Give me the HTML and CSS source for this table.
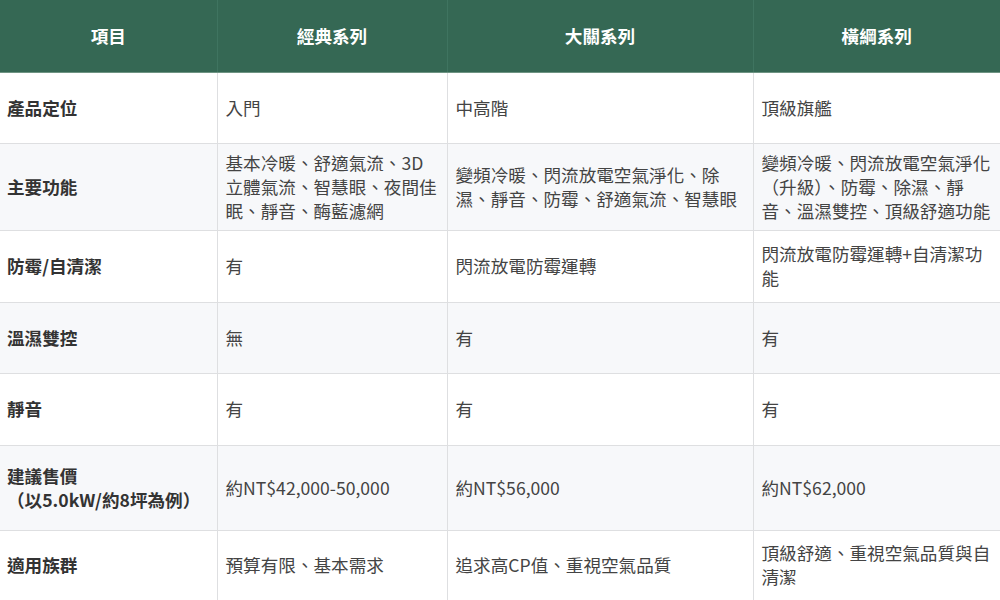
FILE: index.html
```html
<!DOCTYPE html>
<html lang="zh-Hant">
<head>
<meta charset="utf-8">
<title>系列比較</title>
<link rel="stylesheet" href="styles.css">
</head>
<body>
<table class="compare">
  <colgroup>
    <col class="c1"><col class="c2"><col class="c3"><col class="c4">
  </colgroup>
  <thead>
    <tr class="h-head">
      <th>項目</th><th>經典系列</th><th>大關系列</th><th>橫綱系列</th>
    </tr>
  </thead>
  <tbody>
    <tr class="h71">
      <td class="label">產品定位</td><td>入門</td><td>中高階</td><td>頂級旗艦</td>
    </tr>
    <tr class="alt h87">
      <td class="label">主要功能</td>
      <td>基本冷暖、舒適氣流、3D立體氣流、智慧眼、夜間佳眠、靜音、酶藍濾網</td>
      <td>變頻冷暖、閃流放電空氣淨化、除濕、靜音、防霉、舒適氣流、智慧眼</td>
      <td>變頻冷暖、閃流放電空氣淨化（升級）、防霉、除濕、靜音、溫濕雙控、頂級舒適功能</td>
    </tr>
    <tr class="h72">
      <td class="label">防霉/自清潔</td><td>有</td><td>閃流放電防霉運轉</td><td>閃流放電防霉運轉+自清潔功能</td>
    </tr>
    <tr class="alt h71">
      <td class="label">溫濕雙控</td><td>無</td><td>有</td><td>有</td>
    </tr>
    <tr class="h72">
      <td class="label">靜音</td><td>有</td><td>有</td><td>有</td>
    </tr>
    <tr class="alt h85">
      <td class="label">建議售價<br>（以5.0kW/約8坪為例）</td><td>約NT$42,000-50,000</td><td>約NT$56,000</td><td>約NT$62,000</td>
    </tr>
    <tr class="h70">
      <td class="label">適用族群</td><td>預算有限、基本需求</td><td>追求高CP值、重視空氣品質</td><td>頂級舒適、重視空氣品質與自清潔</td>
    </tr>
  </tbody>
</table>
</body>
</html>
```
FILE: styles.css
```css
html, body {
  margin: 0;
  padding: 0;
  background: #ffffff;
}
body {
  font-family: "Noto Sans CJK TC", "Noto Sans", sans-serif;
  font-size: 17.6px;
  line-height: 24px;
  color: #444444;
}
.compare {
  width: 1000px;
  table-layout: fixed;
  border-collapse: collapse;
}
.c1 { width: 217px; }
.c2 { width: 230px; }
.c3 { width: 306px; }
.c4 { width: 247px; }
.compare th {
  background: #356854;
  color: #ffffff;
  font-weight: 700;
  text-align: center;
  padding: 0 8px;
  border-left: 1px solid #3f7460;
  border-bottom: 1px solid #6e9483;
}
.compare th:first-child { border-left: none; }
.compare td {
  padding: 6px 8px;
  vertical-align: middle;
  border: 1px solid #dedfe1;
  text-align: left;
}
.compare td:first-child { border-left: none; }
.compare td:last-child { border-right: none; }
.compare tr:last-child td { border-bottom: none; }
.compare td.label {
  font-weight: 700;
  color: #333333;
  padding-left: 7px;
}
.alt td { background: #f7f8fa; }
.h-head { height: 72px; }
.h70 { height: 70px; }
.h71 { height: 71px; }
.h72 { height: 72px; }
.h85 { height: 85px; }
.h87 { height: 87px; }
```
